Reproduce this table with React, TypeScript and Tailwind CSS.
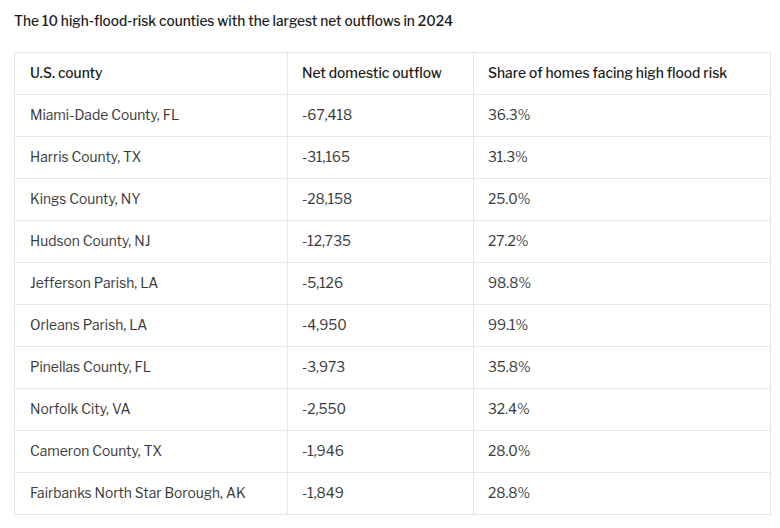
const rows: [string, string, string][] = [
  ['Miami-Dade County, FL', '-67,418', '36.3%'],
  ['Harris County, TX', '-31,165', '31.3%'],
  ['Kings County, NY', '-28,158', '25.0%'],
  ['Hudson County, NJ', '-12,735', '27.2%'],
  ['Jefferson Parish, LA', '-5,126', '98.8%'],
  ['Orleans Parish, LA', '-4,950', '99.1%'],
  ['Pinellas County, FL', '-3,973', '35.8%'],
  ['Norfolk City, VA', '-2,550', '32.4%'],
  ['Cameron County, TX', '-1,946', '28.0%'],
  ['Fairbanks North Star Borough, AK', '-1,849', '28.8%'],
];

export default function App() {
  return (
    <div
      className="w-[780px] h-[528px] bg-white pl-[14px] pt-[11px] overflow-hidden"
      style={{ fontFamily: '"Libre Franklin", Inter, "Noto Sans", sans-serif' }}
    >
      <h1 className="text-[13.7px] leading-[20px] font-medium text-[#1a1a1a]">
        The 10 high-flood-risk counties with the largest net outflows in 2024
      </h1>
      <table className="mt-[21px] w-[757px] border-collapse text-[13.8px] table-fixed">
        <colgroup>
          <col className="w-[273px]" />
          <col className="w-[186px]" />
          <col />
        </colgroup>
        <thead>
          <tr className="h-[42px]">
            {['U.S. county', 'Net domestic outflow', 'Share of homes facing high flood risk'].map((h, i) => (
              <th
                key={h}
                className={`border border-[#e6e6e6] text-left font-medium text-[#1a1a1a] ${i === 0 ? 'pl-[15px]' : 'pl-[14px]'}`}
              >
                {h}
              </th>
            ))}
          </tr>
        </thead>
        <tbody>
          {rows.map((r) => (
            <tr key={r[0]} className="h-[42px]">
              {r.map((c, i) => (
                <td
                  key={i}
                  className={`border border-[#e6e6e6] text-[#3a3a3a] ${i === 0 ? 'pl-[15px]' : 'pl-[14px]'}`}
                >
                  {c}
                </td>
              ))}
            </tr>
          ))}
        </tbody>
      </table>
    </div>
  );
}
